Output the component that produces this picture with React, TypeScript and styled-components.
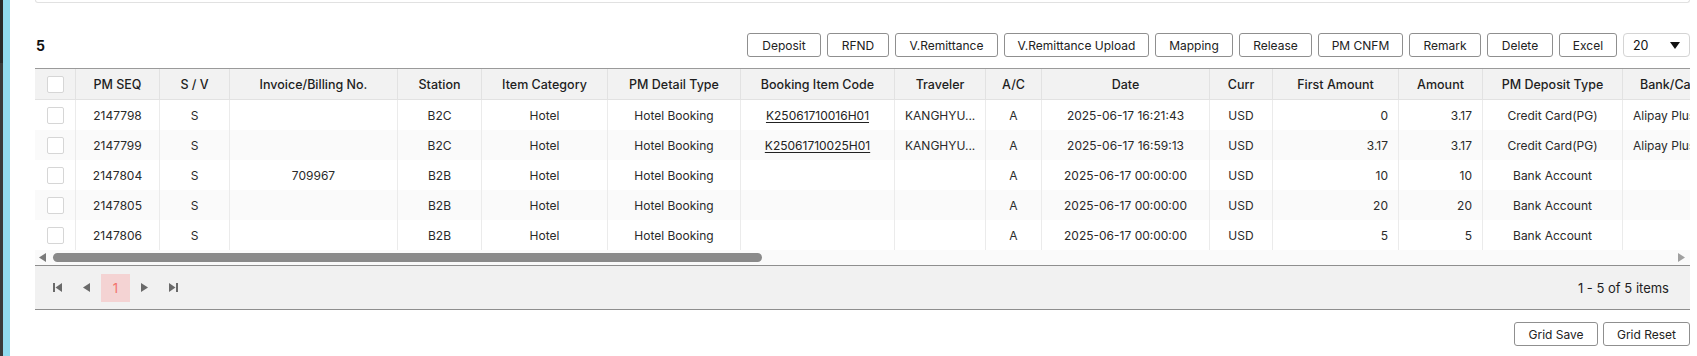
import React from 'react';
import styled, { createGlobalStyle } from 'styled-components';

const GlobalStyle = createGlobalStyle`
  html, body {
    margin: 0;
    padding: 0;
    background: #ffffff;
    font-family: Inter, "Noto Sans", sans-serif;
    color: #222;
  }
  * {
    box-sizing: border-box;
  }
`;

const Shell = styled.div`
  display: flex;
  width: 1697px;
  height: 356px;
  overflow: hidden;
`;

const RailDark = styled.div`
  width: 3px;
  background: linear-gradient(#2a2a2a 0 63px, #3a3a3a 63px);
`;

const RailBlue = styled.div`
  width: 7px;
  background: #91dbef;
`;

const Main = styled.div`
  flex: 1;
  min-width: 0;
  padding: 0 7px 0 25px;
  display: flex;
  flex-direction: column;
`;

const TopCard = styled.div`
  height: 3px;
  border: 1px solid #e1e1e1;
  border-top: none;
  border-radius: 0 0 7px 7px;
`;

const Toolbar = styled.div`
  margin-top: 30px;
  height: 24px;
  display: flex;
  align-items: center;
  justify-content: space-between;
`;

const Count = styled.span`
  font-size: 14px;
  font-weight: 700;
  color: #111;
  padding-left: 1px;
`;

const Actions = styled.div`
  display: flex;
  align-items: center;
  gap: 6px;
`;

const Button = styled.button<{ $w: number }>`
  width: ${(p) => p.$w}px;
  height: 24px;
  padding: 0;
  border: 1px solid #8f8f8f;
  border-radius: 3px;
  background: #fff;
  font-family: Inter, sans-serif;
  font-size: 12px;
  color: #222;
  cursor: pointer;
`;

const PageSize = styled.div`
  width: 67px;
  height: 24px;
  border: 1px solid #d4d4d4;
  border-radius: 4px;
  display: flex;
  align-items: center;
  justify-content: space-between;
  padding: 0 9px 0 9px;
  font-size: 12.5px;
  color: #111;
`;

const Grid = styled.div`
  margin-top: 11px;
  border-top: 1px solid #9a9a9a;
`;

const Clip = styled.div`
  width: 100%;
  overflow: hidden;
`;

const Table = styled.table`
  border-collapse: separate;
  border-spacing: 0;
  table-layout: fixed;
`;

const HeadRow = styled.tr`
  height: 31px;
  background: #f2f2f2;
`;

const Th = styled.th<{ $align: string }>`
  padding: ${(p) => (p.$align === 'left' ? '0 6px 0 17px' : '0 6px')};
  border-right: 1px solid #e2e2e2;
  border-bottom: 1px solid #e2e2e2;
  font-size: 12.5px;
  font-weight: 500;
  color: #1e1e1e;
  text-align: ${(p) => p.$align};
  white-space: nowrap;
  overflow: hidden;
`;

const Row = styled.tr<{ $alt: boolean }>`
  height: 30px;
  background: ${(p) => (p.$alt ? '#fafafa' : '#ffffff')};
`;

const Td = styled.td<{ $align: string }>`
  padding: 0 10px;
  border-right: 1px solid #ebebeb;
  font-size: 12px;
  color: #2a2a2a;
  text-align: ${(p) => p.$align};
  white-space: nowrap;
  overflow: hidden;
`;

const Check = styled.span`
  display: inline-block;
  width: 17px;
  height: 17px;
  border: 1px solid #d6d6d6;
  border-radius: 2px;
  background: #fff;
  vertical-align: middle;
`;

const Link = styled.a`
  color: #222;
  text-decoration: underline;
  text-underline-offset: 2px;
`;

const ScrollBar = styled.div`
  height: 15px;
  display: flex;
  align-items: center;
  background: #fafafa;
  padding: 0 5px 0 4px;
`;

const Thumb = styled.div<{ $w: number }>`
  width: ${(p) => p.$w}px;
  height: 9px;
  margin-left: 7px;
  border-radius: 5px;
  background: #8a8a8a;
`;

const Spacer = styled.div`
  flex: 1;
`;

const Pager = styled.div`
  height: 45px;
  border-top: 1px solid #8e8e8e;
  border-bottom: 1px solid #8e8e8e;
  background: #f1f1f1;
  display: flex;
  align-items: center;
  padding: 0 21px 0 8px;
`;

const PagerNav = styled.div`
  display: flex;
  align-items: center;
`;

const NavBtn = styled.span`
  width: 29px;
  height: 28px;
  display: flex;
  align-items: center;
  justify-content: center;
`;

const PageCurrent = styled.span`
  width: 29px;
  height: 28px;
  display: flex;
  align-items: center;
  justify-content: center;
  background: #f4d3d3;
  color: #f2726c;
  font-size: 13px;
`;

const PagerInfo = styled.span`
  margin-left: auto;
  font-size: 13px;
  color: #1e1e1e;
`;

const Footer = styled.div`
  margin-top: 12px;
  display: flex;
  justify-content: flex-end;
  gap: 5px;
`;

type Col = { title: string; width: number; align: 'center' | 'left' | 'right'; head?: 'center' | 'left' };

const columns: Col[] = [
  { title: '', width: 41, align: 'center' },
  { title: 'PM SEQ', width: 84, align: 'center' },
  { title: 'S / V', width: 70, align: 'center' },
  { title: 'Invoice/Billing No.', width: 168, align: 'center' },
  { title: 'Station', width: 84, align: 'center' },
  { title: 'Item Category', width: 126, align: 'center' },
  { title: 'PM Detail Type', width: 133, align: 'center' },
  { title: 'Booking Item Code', width: 154, align: 'center' },
  { title: 'Traveler', width: 91, align: 'center' },
  { title: 'A/C', width: 56, align: 'center' },
  { title: 'Date', width: 168, align: 'center' },
  { title: 'Curr', width: 63, align: 'center' },
  { title: 'First Amount', width: 126, align: 'right' },
  { title: 'Amount', width: 84, align: 'right' },
  { title: 'PM Deposit Type', width: 140, align: 'center' },
  { title: 'Bank/Card', width: 110, align: 'left', head: 'left' },
  { title: 'Card No.', width: 140, align: 'center' },
  { title: 'Remark', width: 200, align: 'left' },
];

const rows = [
  ['2147798', 'S', '', 'B2C', 'Hotel', 'Hotel Booking', 'K25061710016H01', 'KANGHYU...', 'A', '2025-06-17 16:21:43', 'USD', '0', '3.17', 'Credit Card(PG)', 'Alipay Plus', '', ''],
  ['2147799', 'S', '', 'B2C', 'Hotel', 'Hotel Booking', 'K25061710025H01', 'KANGHYU...', 'A', '2025-06-17 16:59:13', 'USD', '3.17', '3.17', 'Credit Card(PG)', 'Alipay Plus', '', ''],
  ['2147804', 'S', '709967', 'B2B', 'Hotel', 'Hotel Booking', '', '', 'A', '2025-06-17 00:00:00', 'USD', '10', '10', 'Bank Account', '', '', ''],
  ['2147805', 'S', '', 'B2B', 'Hotel', 'Hotel Booking', '', '', 'A', '2025-06-17 00:00:00', 'USD', '20', '20', 'Bank Account', '', '', ''],
  ['2147806', 'S', '', 'B2B', 'Hotel', 'Hotel Booking', '', '', 'A', '2025-06-17 00:00:00', 'USD', '5', '5', 'Bank Account', '', '', ''],
];

const actions: [string, number][] = [
  ['Deposit', 74],
  ['RFND', 62],
  ['V.Remittance', 103],
  ['V.Remittance Upload', 145],
  ['Mapping', 78],
  ['Release', 73],
  ['PM CNFM', 85],
  ['Remark', 72],
  ['Delete', 66],
  ['Excel', 58],
];

const Tri = ({ dir, color = '#6a6a6a' }: { dir: 'left' | 'right'; color?: string }) => (
  <svg width="7" height="9" viewBox="0 0 7 9">
    <polygon points={dir === 'left' ? '7,0 0,4.5 7,9' : '0,0 7,4.5 0,9'} fill={color} />
  </svg>
);

const Edge = ({ dir }: { dir: 'first' | 'last' }) => (
  <svg width="9" height="9" viewBox="0 0 9 9">
    {dir === 'first' ? (
      <>
        <rect x="0" y="0" width="2" height="9" fill="#6a6a6a" />
        <polygon points="9,0 2.5,4.5 9,9" fill="#6a6a6a" />
      </>
    ) : (
      <>
        <rect x="7" y="0" width="2" height="9" fill="#6a6a6a" />
        <polygon points="0,0 6.5,4.5 0,9" fill="#6a6a6a" />
      </>
    )}
  </svg>
);

const App = () => {
  return (
    <>
      <GlobalStyle />
      <Shell>
        <RailDark />
        <RailBlue />
        <Main>
          <TopCard />
          <Toolbar>
            <Count>5</Count>
            <Actions>
              {actions.map(([label, w]) => (
                <Button key={label} $w={w}>
                  {label}
                </Button>
              ))}
              <PageSize>
                <span>20</span>
                <svg width="10" height="7" viewBox="0 0 10 7">
                  <polygon points="0,0 10,0 5,7" fill="#111" />
                </svg>
              </PageSize>
            </Actions>
          </Toolbar>
          <Grid>
            <Clip>
              <Table style={{ width: columns.reduce((s, c) => s + c.width, 0) }}>
                <colgroup>
                  {columns.map((c, i) => (
                    <col key={i} style={{ width: c.width }} />
                  ))}
                </colgroup>
                <thead>
                  <HeadRow>
                    {columns.map((c, i) => (
                      <Th key={i} $align={c.head ?? 'center'}>
                        {i === 0 ? <Check /> : c.title}
                      </Th>
                    ))}
                  </HeadRow>
                </thead>
                <tbody>
                  {rows.map((r, ri) => (
                    <Row key={ri} $alt={ri % 2 === 1}>
                      <Td $align="center">
                        <Check />
                      </Td>
                      {r.map((v, ci) => (
                        <Td key={ci} $align={columns[ci + 1].align}>
                          {ci === 6 && v ? <Link>{v}</Link> : v}
                        </Td>
                      ))}
                    </Row>
                  ))}
                </tbody>
              </Table>
            </Clip>
            <ScrollBar>
              <Tri dir="left" color="#7a7a7a" />
              <Thumb $w={709} />
              <Spacer />
              <Tri dir="right" color="#a0a0a0" />
            </ScrollBar>
            <Pager>
              <PagerNav>
                <NavBtn>
                  <Edge dir="first" />
                </NavBtn>
                <NavBtn>
                  <Tri dir="left" />
                </NavBtn>
                <PageCurrent>1</PageCurrent>
                <NavBtn>
                  <Tri dir="right" />
                </NavBtn>
                <NavBtn>
                  <Edge dir="last" />
                </NavBtn>
              </PagerNav>
              <PagerInfo>1 - 5 of 5 items</PagerInfo>
            </Pager>
          </Grid>
          <Footer>
            <Button $w={84}>Grid Save</Button>
            <Button $w={87}>Grid Reset</Button>
          </Footer>
        </Main>
      </Shell>
    </>
  );
};

export default App;
